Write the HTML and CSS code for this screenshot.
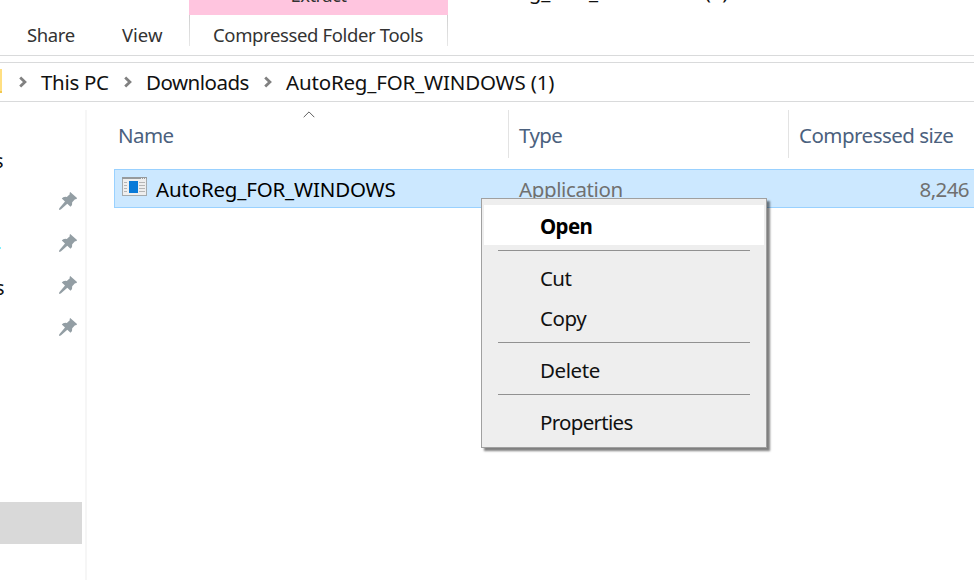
FILE: index.html
```html
<!DOCTYPE html>
<html lang="en">
<head>
<meta charset="utf-8">
<title>AutoReg_FOR_WINDOWS (1)</title>
<link rel="stylesheet" href="styles.css">
</head>
<body>
<svg class="defs" aria-hidden="true">
  <symbol id="pin" viewBox="0 0 18 18"><path d="M11.2 0 L18 6 Q17.8 7.6 16 7.2 L13.2 10.2 Q13.7 13.1 11.5 14.8 L8.3 11.8 L1.8 17.6 L0 18 L.3 16.2 L6 9.6 L2.8 6.6 Q4.3 4.3 7.8 5 L10.8 2.2 Q10.2 .8 11.2 0 Z" fill="#939ea4"/></symbol>
  <symbol id="chevron" viewBox="0 0 9 12"><path d="M1.2 1.5 L5.9 6 L1.2 10.5" fill="none" stroke="#818181" stroke-width="2.8"/></symbol>
</svg>
<div class="window">
  <header class="ribbon">
    <nav class="tabs">
      <span class="tab share">Share</span>
      <span class="tab view">View</span>
      <div class="context-tab">
        <div class="context-title"><span>Extract</span></div>
        <div class="context-label"><span class="tab tools">Compressed Folder Tools</span></div>
      </div>
    </nav>
    <div class="caption">AutoReg_FOR_WINDOWS (1)</div>
  </header>
  <div class="address">
    <i class="folder"></i>
    <svg class="chev"><use href="#chevron"/></svg>
    <span class="crumb pc">This PC</span>
    <svg class="chev"><use href="#chevron"/></svg>
    <span class="crumb downloads">Downloads</span>
    <svg class="chev"><use href="#chevron"/></svg>
    <span class="crumb archive">AutoReg_FOR_WINDOWS (1)</span>
  </div>
  <div class="content">
    <aside class="sidebar">
      <div class="place"><span class="clip first">s</span></div>
      <div class="place"><svg class="pin"><use href="#pin"/></svg></div>
      <div class="place"><i class="arrow-tip"></i><svg class="pin"><use href="#pin"/></svg></div>
      <div class="place"><span class="clip">s</span><svg class="pin"><use href="#pin"/></svg></div>
      <div class="place"><svg class="pin"><use href="#pin"/></svg></div>
      <div class="place selected"></div>
    </aside>
    <main class="files">
      <div class="columns">
        <div class="col"><span class="name-head">Name</span>
          <svg class="sort" viewBox="0 0 12 7"><path d="M.7 6.2 L6 .9 L11.3 6.2" fill="none" stroke="#606060"/></svg>
        </div>
        <div class="col"><span class="type-head">Type</span></div>
        <div class="col"><span class="size-head">Compressed size</span></div>
      </div>
      <div class="row">
        <div class="cell file">
          <svg class="app" viewBox="0 0 25 19" shape-rendering="crispEdges">
            <path d="M0 0H25V19H0Z" fill="#a4aaad"/><path d="M1 2H24V18H1Z" fill="#eeeeee"/>
            <path d="M0 0H25V2H0Z" fill="#969a9d"/><path d="M19 1H20V2H19ZM21 1H22V2H21ZM23 1H24V2H23Z" fill="#eee"/>
            <path d="M2 5.5H5M2 8.5H5M2 11.5H5M2 14.5H5M17 5.5H23M17 8.5H23M17 11.5H23M17 14.5H23" stroke="#b5b5b5"/>
            <path d="M7 4H16V16H7Z" fill="#087ad8"/>
          </svg>
          <span class="file-name">AutoReg_FOR_WINDOWS</span>
        </div>
        <div class="cell type"><span>Application</span></div>
        <div class="cell size"><span>8,246</span></div>
      </div>
    </main>
  </div>
  <div class="menu">
    <div class="item active"><span class="m-open">Open</span></div>
    <hr>
    <div class="item"><span class="m-cut">Cut</span></div>
    <div class="item"><span class="m-copy">Copy</span></div>
    <hr>
    <div class="item"><span class="m-delete">Delete</span></div>
    <hr>
    <div class="item"><span class="m-properties">Properties</span></div>
  </div>
</div>
</body>
</html>
```
FILE: styles.css
```css
* { box-sizing: border-box; }
body { margin: 0; background: #fff; color: #111; font: 20.5px/28px "Noto Sans", "Open Sans", sans-serif; letter-spacing: -.6px; }
span { white-space: nowrap; }
svg { display: block; flex: none; }
.defs { position: absolute; width: 0; height: 0; }
.window { position: relative; width: 974px; height: 580px; overflow: hidden; display: flex; flex-direction: column; }

.ribbon { height: 56px; flex: none; display: flex; border-bottom: 1px solid #d9dadb; overflow: hidden; }
.tabs { display: flex; width: 448px; flex: none; font-size: 18.5px; color: #333; padding-left: 27px; }
.tab { line-height: 26px; margin-top: 22px; letter-spacing: -.37px; }
.share { width: 95px; }
.view { width: 67px; letter-spacing: 0; }
.context-tab { width: 259px; height: 46px; }
.context-title { height: 15px; background: #ffc5df; display: flex; justify-content: center; overflow: hidden; line-height: 26px; }
.context-title span { margin-top: -18px; }
.context-label { height: 31px; padding-left: 23px; display: flex; border: solid; border-width: 0 1px; border-image: linear-gradient(#cfcfcf, #e8e8e8) 1; }
.context-label .tab { margin-top: 7px; }
.caption { margin: -23px 0 0 12px; white-space: nowrap; letter-spacing: -.17px; }

.address { height: 40px; margin-top: 6px; flex: none; display: flex; align-items: center; border: solid #d9dadb; border-width: 1px 0; }
.folder { width: 2px; height: 24px; background: #ffdf82; border-bottom: 2px solid #f2c84f; margin: 0 17px 3px 0; }
.chev { width: 9px; height: 12px; }
.crumb { margin-left: 13px; }
.pc { width: 83px; letter-spacing: -.3px; }
.downloads { width: 118px; letter-spacing: -.5px; }
.archive { letter-spacing: -.17px; }

.content { flex: 1; display: flex; padding-top: 8px; }
.sidebar { width: 87px; border-right: 2px solid #f6f6f6; padding-top: 29px; }
.place { height: 42px; width: 82px; display: flex; align-items: center; position: relative; }
.pin { width: 18px; height: 18px; margin: -3px 5px 0 auto; }
.clip { width: 4px; overflow: hidden; direction: rtl; margin-top: 1px; margin-right: -4px; }
.clip.first { width: 3px; margin-top: 0; }
.arrow-tip { width: 1px; height: 2px; background: #7ff1ff; margin-top: 8px; }
.selected { background: #d9d9d9; margin-top: 153px; }

.files { flex: 1; padding-left: 27px; }
.columns { display: grid; grid-template-columns: 394px 280px 1fr; height: 48px; color: #4b617e; }
.col { position: relative; padding: 11px 0 0 10px; border-left: 1px solid #e3e3e3; }
.col:first-child { border: 0; padding-left: 4px; }
.size-head { letter-spacing: -.52px; }
.sort { position: absolute; left: 189px; top: 1px; width: 12px; height: 7px; }
.row { margin-top: 11px; height: 39px; background: #cce8ff; border: 1px solid #99d1ff; border-right: 0; display: grid; grid-template-columns: 394px 280px 1fr; }
.cell { display: flex; padding-top: 5px; color: #707070; }
.file { color: #000; padding-left: 7px; }
.file-name { letter-spacing: -.17px; }
.app { width: 25px; height: 19px; margin: 2px 9px 0 0; }
.type { padding-left: 10px; letter-spacing: -.38px; }
.size { justify-content: flex-end; padding-right: 5px; }

.menu { position: absolute; left: 481px; top: 198px; width: 286px; height: 250px; background: #eee; border: 1px solid #a0a0a0; padding: 6px 2px; box-shadow: 3px 3px 2px #00000080; }
.item { height: 40px; padding: 7px 0 0 56px; }
.active { background: #fff; color: #000; font-weight: 700; }
.m-copy, .m-delete { letter-spacing: -.4px; }
.m-properties { letter-spacing: -.7px; }
.menu hr { border: 0; height: 1px; background: #919191; margin: 5px 14px 6px; }
```
